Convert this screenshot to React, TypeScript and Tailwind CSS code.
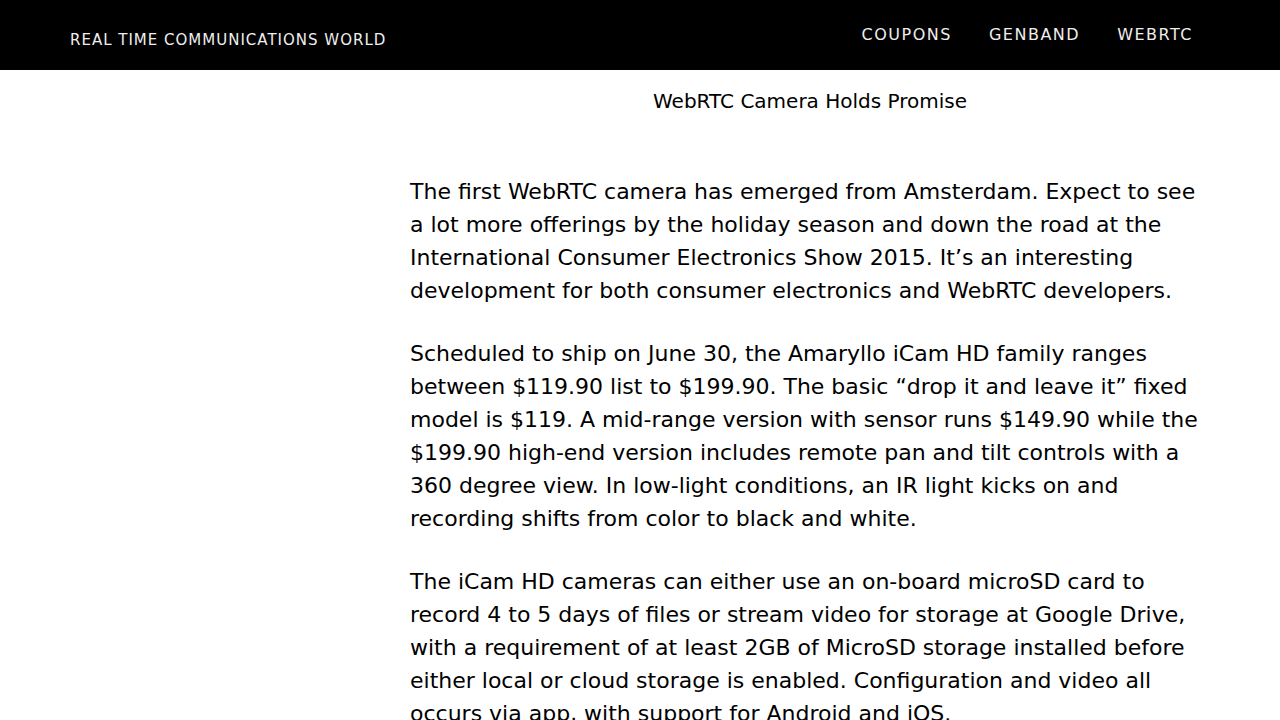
const NAV = ['COUPONS', 'GENBAND', 'WEBRTC'];

const PARAGRAPHS = [
  'The first WebRTC camera has emerged from Amsterdam. Expect to see a lot more offerings by the holiday season and down the road at the International Consumer Electronics Show 2015. It’s an interesting development for both consumer electronics and WebRTC developers.',
  'Scheduled to ship on June 30, the Amaryllo iCam HD family ranges between $119.90 list to $199.90. The basic “drop it and leave it” fixed model is $119. A mid-range version with sensor runs $149.90 while the $199.90 high-end version includes remote pan and tilt controls with a 360 degree view. In low-light conditions, an IR light kicks on and recording shifts from color to black and white.',
  'The iCam HD cameras can either use an on-board microSD card to record 4 to 5 days of files or stream video for storage at Google Drive, with a requirement of at least 2GB of MicroSD storage installed before either local or cloud storage is enabled. Configuration and video all occurs via app, with support for Android and iOS.',
];

export default function App() {
  return (
    <div className="h-[720px] overflow-hidden bg-white font-['DejaVu_Sans',sans-serif] text-black">
      {/* Top bar */}
      <header className="flex h-[70px] items-start justify-between bg-black pl-[70px] pr-[87px] text-[#eeeeee]">
        <a className="mt-[30px] text-[15px] leading-[20px] tracking-[1px]">REAL TIME COMMUNICATIONS WORLD</a>
        <nav className="mt-[24px] flex gap-[37px]">
          {NAV.map((item) => (
            <a key={item} className="text-[16px] leading-[22px] tracking-[1.5px]">
              {item}
            </a>
          ))}
        </nav>
      </header>

      <div className="flex">
        {/* Sidebar */}
        <aside className="mt-[36px] h-[620px] w-[361px] shrink-0" />

        {/* Article */}
        <main className="ml-[49px] w-[800px]">
          <h1 className="mt-[19px] text-center text-[20px] leading-[24px]">WebRTC Camera Holds Promise</h1>
          <div className="mt-[62px] flex flex-col gap-[30px]">
            {PARAGRAPHS.map((p, i) => (
              <p key={i} className="text-[22px] leading-[33px]">
                {p}
              </p>
            ))}
          </div>
        </main>
      </div>
    </div>
  );
}
